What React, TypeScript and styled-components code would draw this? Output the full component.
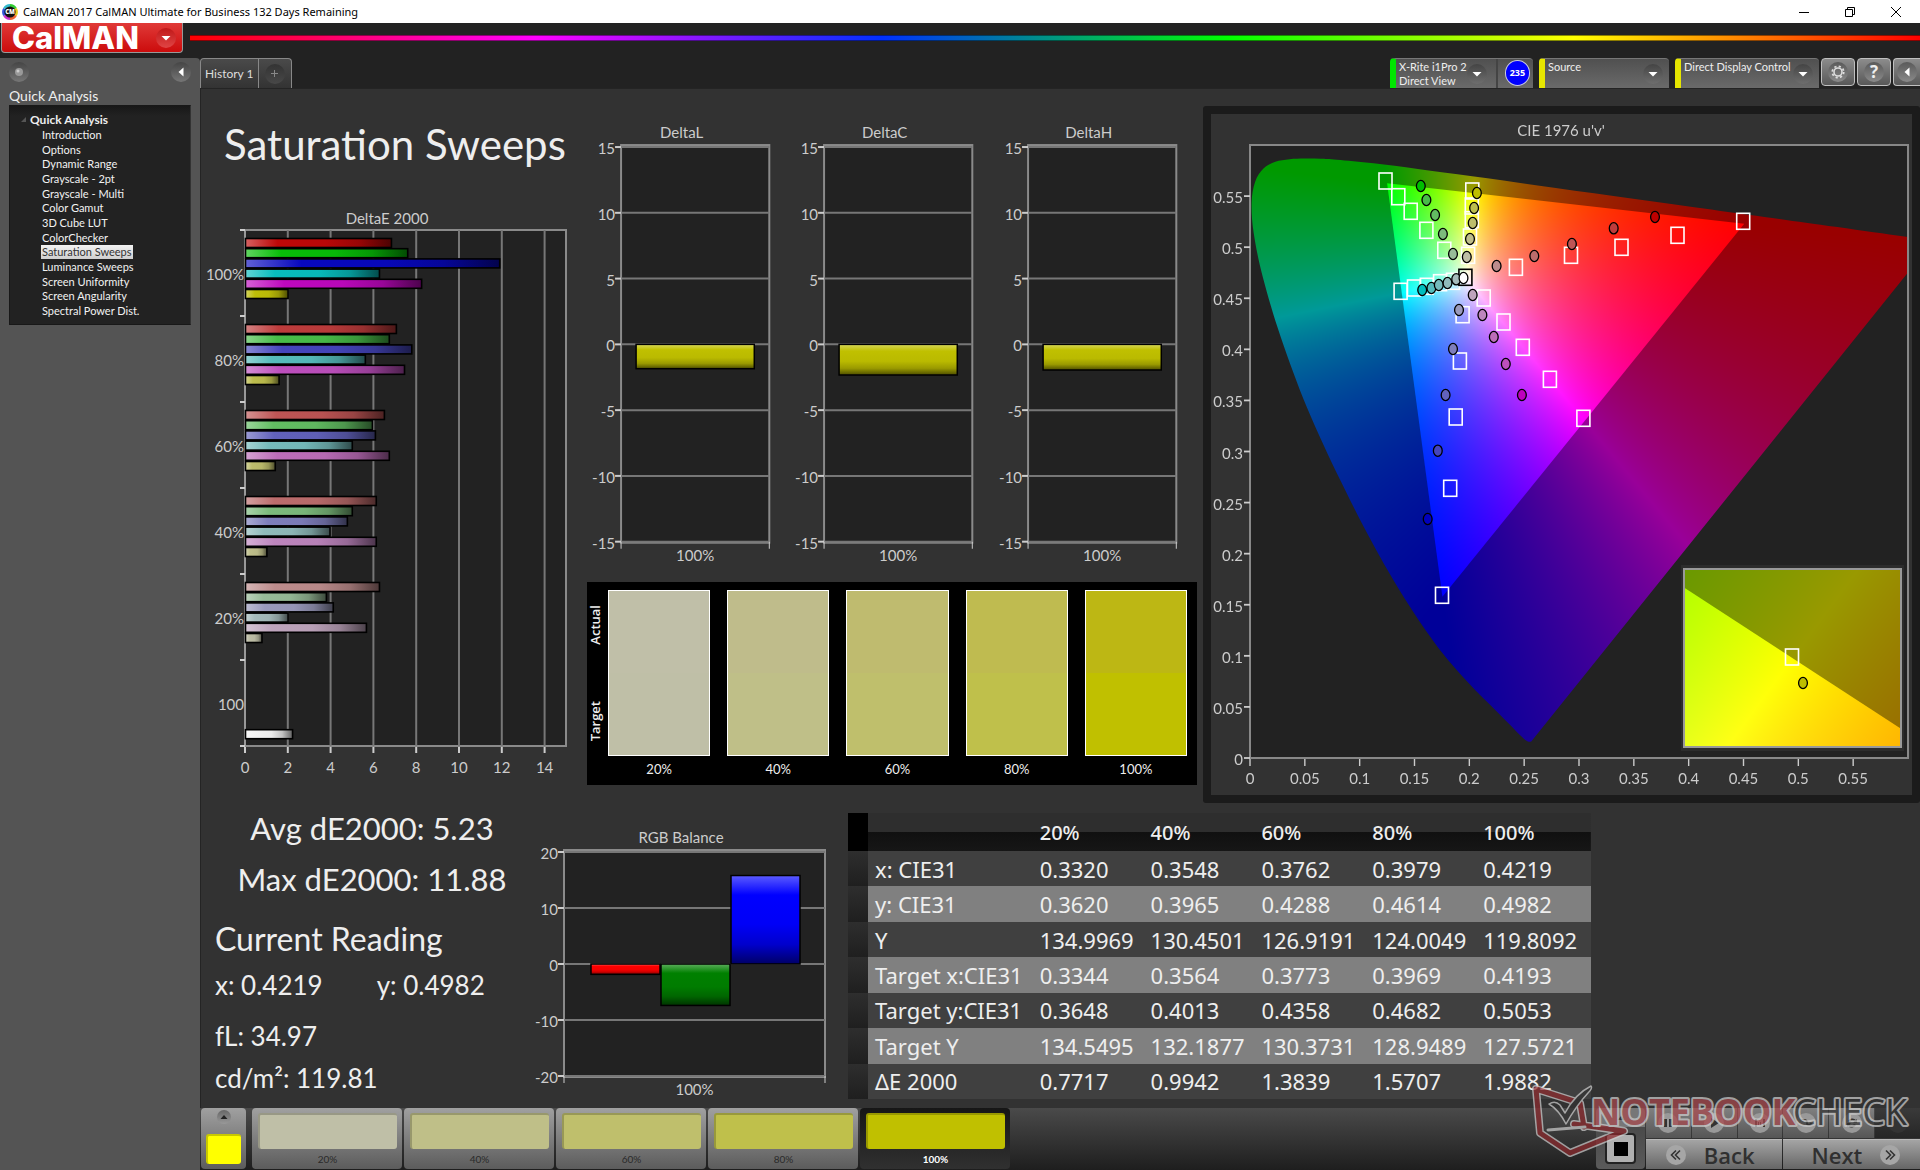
import React, { useEffect, useRef } from 'react';
import styled, { createGlobalStyle } from 'styled-components';

const GlobalStyle = createGlobalStyle`
  * { box-sizing: border-box; }
  html, body { margin: 0; background: #222; }
  body { font-family: Lato, "Open Sans", sans-serif; color: #eee; }
  button, select { font-family: inherit; color: inherit; margin: 0; padding: 0; border: 0; }
  ul { list-style: none; margin: 0; padding: 0; }
  h1, h2, p { margin: 0; font-weight: 400; }
  svg, canvas { display: block; }
`;

/* ---------- window frame ---------- */

const Page = styled.div`
  min-height: 100vh;
  display: flex;
  flex-direction: column;
  background: #222;
  overflow: hidden;
`;

const TitleBar = styled.header`
  display: flex;
  align-items: center;
  height: 23px;
  padding: 0 14px 0 2px;
  gap: 5px;
  background: #fff;
  color: #000;
`;

const TitleText = styled.span`
  flex: 1;
  font: 11px/16px "Noto Sans", "Open Sans", sans-serif;
`;

const WindowButton = styled.button`
  display: grid;
  place-items: center;
  width: 46px;
  height: 20px;
  background: none;
  color: #000;
  &:last-child { width: 20px; margin-left: 13px; }
`;

const BrandRow = styled.div`
  display: flex;
  height: 35px;
  padding-left: 1px;
`;

const Brand = styled.button`
  display: flex;
  align-items: center;
  justify-content: space-between;
  width: 182px;
  height: 30px;
  padding: 0 6px 0 10px;
  border: 1px solid #999;
  border-top: 0;
  border-radius: 0 0 4px 4px;
  background: linear-gradient(#e03a38, #cc0c0c);
  color: #fff;
  font: 800 31px/30px Inter, "Open Sans", sans-serif;
`;

const Rainbow = styled.div`
  flex: 1;
  height: 6px;
  margin: 12px 0 0 7px;
  border: solid rgba(0, 0, 0, 0.45);
  border-width: 1px 0;
  background: linear-gradient(90deg, #f00, #f0f 20%, #0030ff 40%, #0f0 60%, #ff0 80%, #f00);
`;

const Body = styled.div`
  flex: 1;
  display: flex;
`;

/* ---------- sidebar ---------- */

const Sidebar = styled.aside`
  flex: 0 0 200px;
  padding: 4px 9px;
  border-radius: 0 4px 0 0;
  background: #545454;
`;

const SidebarTools = styled.div`
  display: flex;
  justify-content: space-between;
  height: 22px;
`;

const Round = styled.button<{ $size?: number; $from?: string; $to?: string }>`
  display: grid;
  place-items: center;
  flex: none;
  width: ${(p) => p.$size || 20}px;
  height: ${(p) => p.$size || 20}px;
  border-radius: 50%;
  background: linear-gradient(${(p) => p.$from || '#454545'}, ${(p) => p.$to || '#767676'});
`;

const SidebarTitle = styled.h2`
  height: 21px;
  padding-top: 2px;
  font-size: 14px;
  line-height: 20px;
`;

const TreeBox = styled.nav`
  height: 220px;
  padding: 5px 0 6px 11px;
  border: 1px solid #181818;
  border-right-color: #333;
  background: linear-gradient(#181818, #222 10px);
  font-size: 11px;
  line-height: 14px;
`;

const TreeHead = styled.div`
  display: flex;
  align-items: center;
  gap: 4px;
  height: 17px;
  font-size: 12px;
  font-weight: 700;
`;

const Tree = styled.ul`
  display: flex;
  flex-direction: column;
  justify-content: space-between;
  height: 190px;
  padding-left: 20px;
`;

const TreeLink = styled.a<{ $selected?: boolean }>`
  display: inline-block;
  padding: 0 1px;
  color: ${(p) => (p.$selected ? '#333' : '#f2f2f2')};
  background: ${(p) => (p.$selected ? 'linear-gradient(#f2f2f2, #cfcfcf)' : 'none')};
  text-decoration: none;
`;

/* ---------- tabs and device bar ---------- */

const Main = styled.main`
  flex: 1;
  min-width: 0;
  display: flex;
  flex-direction: column;
`;

const TopBar = styled.div`
  display: flex;
  justify-content: space-between;
  height: 30px;
`;

const Group = styled.div<{ $gap?: number }>`
  display: flex;
  gap: ${(p) => p.$gap || 0}px;
`;

const Tab = styled.button`
  display: grid;
  place-items: center;
  min-width: 33px;
  padding: 0 4px;
  border: solid #888;
  border-width: 1px 1px 0 0;
  background: linear-gradient(#4a4a4a, #333);
  color: #ddd;
  font-size: 12px;
  &:first-child { border-left-width: 1px; border-radius: 4px 0 0 0; }
  &:last-child { border-radius: 0 4px 0 0; }
`;

const Device = styled.div<{ $stripe: string; $width: number }>`
  display: flex;
  width: ${(p) => p.$width}px;
  border-left: 6px solid ${(p) => p.$stripe};
  border-top: 1px solid #777;
  border-radius: 4px 4px 0 0;
  background: linear-gradient(#505050, #6a6a6a);
`;

const Meter = styled.button`
  flex: 1;
  display: flex;
  align-items: center;
  justify-content: space-between;
  padding: 0 9px 0 3px;
  border-right: 2px solid #444;
  background: none;
  text-align: left;
  font-size: 11px;
  line-height: 14px;
  white-space: nowrap;
`;

const MeterBadge = styled.span`
  width: 26px;
  height: 26px;
  margin: 1px 3px 0 7px;
  border: 1px solid #ccd;
  border-radius: 50%;
  background: #00f;
  color: #fff;
  font: 700 9px/24px "Open Sans", sans-serif;
  text-align: center;
`;

const SelectStack = styled.label`
  flex: 1;
  display: grid;
  align-items: center;
  > * { grid-area: 1 / 1; }
`;

const DeviceSelect = styled.select`
  appearance: none;
  width: 100%;
  height: 29px;
  padding: 0 4px 14px 3px;
  background: none;
  font-size: 11px;
  line-height: 14px;
`;

const SelectArrow = styled.span`
  justify-self: end;
  display: grid;
  place-items: center;
  width: 20px;
  height: 20px;
  margin: 0 6px 0 0;
  border-radius: 50%;
  background: linear-gradient(#444, #6e6e6e);
  pointer-events: none;
`;

const ToolButton = styled.button`
  display: grid;
  place-items: center;
  width: 34px;
  height: 28px;
  border: 1px solid #c0c0c0;
  border-radius: 4px;
  background: linear-gradient(#8c8c8c, #585858);
  &:last-child { width: 27px; border-right: 0; border-radius: 4px 0 0 4px; }
`;

const ToolDisc = styled.span`
  display: grid;
  place-items: center;
  width: 20px;
  height: 20px;
  border-radius: 50%;
  background: linear-gradient(#5a5a5a, #8a8a8a);
  font: 700 17px/20px "Open Sans", sans-serif;
`;

/* ---------- workspace ---------- */

const Workspace = styled.div`
  flex: 1;
  background: #323232;
  box-shadow: inset 1px 1px 0 #242424;
`;

const UpperGrid = styled.section`
  display: grid;
  grid-template-columns: minmax(0, 380fr) minmax(0, 620fr) minmax(0, 720fr);
  height: 715px;
`;

const LowerGrid = styled.section`
  display: grid;
  grid-template-columns: minmax(0, 330fr) minmax(0, 302fr) minmax(0, 759fr) minmax(0, 329fr);
  height: 305px;
`;

const PageTitle = styled.h1`
  height: 107px;
  padding: 29px 0 0 24px;
  font-size: 42px;
  line-height: 54px;
  white-space: nowrap;
`;

const DeltaRow = styled.div`
  display: grid;
  grid-template-columns: repeat(3, minmax(0, 1fr));
  height: 494px;
  padding: 29px 10px 0 0;
`;

const Swatches = styled.div`
  display: flex;
  height: 203px;
  margin: 0 3px 0 7px;
  padding: 8px 10px 0 0;
  background: #000;
`;

const SwatchSides = styled.div`
  display: flex;
  flex-direction: column;
  justify-content: space-between;
  width: 17px;
  height: 166px;
  margin-right: 4px;
  padding: 15px 0;
  font: 600 13px/17px "Open Sans", sans-serif;
`;

const SideLabel = styled.span`
  writing-mode: vertical-rl;
  transform: rotate(180deg);
`;

const SwatchList = styled.div`
  flex: 1;
  display: grid;
  grid-template-columns: repeat(5, minmax(0, 1fr));
  column-gap: 17px;
`;

const SwatchItem = styled.div`
  text-align: center;
  font-size: 13px;
  line-height: 26px;
`;

const SwatchBox = styled.div<{ $actual: string; $target: string }>`
  height: 166px;
  border: 1px solid #fff;
  background: linear-gradient(${(p) => p.$actual} 50%, ${(p) => p.$target} 50%);
`;

const CiePanel = styled.div`
  height: 697px;
  margin: 18px 0 0 3px;
  border: 8px solid #1b1b1b;
  border-radius: 3px;
`;

const CieStack = styled.div`
  display: grid;
  > * { grid-area: 1 / 1; width: 100%; height: auto; }
`;

/* ---------- readings ---------- */

const Readings = styled.div`
  padding: 0 0 0 15px;
  white-space: nowrap;
`;

const Stat = styled.p`
  width: 314px;
  font-size: 31px;
  line-height: 51px;
  text-align: center;
`;

const ReadingTitle = styled.h2`
  padding-top: 9px;
  font-size: 32px;
  line-height: 50px;
`;

const Reading = styled.p<{ $top: number }>`
  display: flex;
  gap: 54px;
  padding-top: ${(p) => p.$top}px;
  font-size: 26px;
  line-height: 42px;
`;

const BalanceCell = styled.div`
  padding-top: 3px;
`;

/* ---------- table ---------- */

const TableCell = styled.div`
  padding: 10px 0 0 16px;
`;

const DataTable = styled.table`
  width: 100%;
  height: 286px;
  border-collapse: collapse;
  table-layout: fixed;
  font: 22px/30px "Noto Sans", "Open Sans", sans-serif;
  th, td { padding: 0 0 0 3px; text-align: left; font-weight: 400; white-space: nowrap; }
  thead { background: linear-gradient(#2e2e2e 50%, #101010 50%, #161616); }
  thead th { height: 38px; padding-top: 2px; font-size: 20px; font-weight: 500; }
  thead td { background: #000; }
`;

const DataRow = styled.tr<{ $light: boolean }>`
  background: ${(p) => (p.$light ? '#808080' : '#404040')};
  td:first-child { background: linear-gradient(#2e2e2e, #1f1f1f); }
  th { padding-left: 7px; }
`;

/* ---------- bottom bar ---------- */

const BottomBar = styled.footer`
  position: relative;
  display: flex;
  justify-content: space-between;
  height: 62px;
  padding-bottom: 1px;
  background: linear-gradient(#4a4a4a, #1e1e1e);
`;

const Picker = styled.button`
  display: flex;
  flex-direction: column;
  align-items: center;
  justify-content: space-between;
  width: 45px;
  margin: 0 4px 0 1px;
  padding: 2px 0 5px;
  border-radius: 4px;
  background: linear-gradient(#a0a0a0, #5c5c5c);
`;

const PickerColor = styled.span`
  width: 35px;
  height: 30px;
  border: solid #c8c800;
  border-width: 2px 0 0 2px;
  border-radius: 3px;
  background: #ff0;
`;

const Patch = styled.button<{ $active?: boolean }>`
  width: 150px;
  padding: 5px 5px 0 6px;
  border-radius: 4px;
  background: ${(p) => (p.$active ? 'linear-gradient(#161616, #303030)' : 'linear-gradient(#a0a0a0, #5c5c5c)')};
  color: ${(p) => (p.$active ? '#fff' : '#2a2a2a')};
  font-size: 10px;
  font-weight: ${(p) => (p.$active ? 700 : 400)};
  line-height: 20px;
`;

const PatchColor = styled.span<{ $color: string }>`
  display: block;
  height: 36px;
  border: solid rgba(0, 0, 0, 0.2);
  border-width: 2px 0 0 2px;
  border-radius: 3px;
  background: ${(p) => p.$color};
`;

const StopButton = styled.button`
  display: flex;
  flex-direction: column;
  align-items: center;
  justify-content: space-between;
  width: 49px;
  height: 61px;
  padding: 5px 0;
  border-radius: 4px;
  background: linear-gradient(#777 19px, #4a4a4a 19px, #5a5a5a);
`;

const StopIcon = styled.span`
  display: grid;
  place-items: center;
  width: 31px;
  height: 31px;
  border: 2px solid #222;
  border-radius: 4px;
  background: #b0b0b0;
  &::after { content: ""; width: 14px; height: 14px; background: #000; }
`;

const Transport = styled.div`
  display: grid;
  grid-template-columns: repeat(6, minmax(0, 1fr));
  grid-template-rows: 30px 30px;
  gap: 1px;
  width: 274px;
`;

const SmallButton = styled.button<{ $off?: boolean }>`
  display: grid;
  place-items: center;
  background: ${(p) => (p.$off ? 'linear-gradient(#3a3a3a, #262626)' : 'linear-gradient(#808080, #565656)')};
`;

const StepButton = styled.button<{ $next?: boolean }>`
  grid-column: span 3;
  display: flex;
  flex-direction: ${(p) => (p.$next ? 'row-reverse' : 'row')};
  align-items: center;
  justify-content: space-between;
  padding: ${(p) => (p.$next ? '0 20px 0 28px' : '0 28px 0 20px')};
  border-top: 1px solid #b8b8b8;
  background: linear-gradient(#a4a4a4, #666);
  color: #303030;
  font: 600 22px/26px "Open Sans", sans-serif;
`;

const Watermark = styled.svg`
  position: absolute;
  right: 9px;
  bottom: 12px;
  width: 380px;
  height: 74px;
  opacity: 0.72;
  pointer-events: none;
`;

/* ---------- chart parts ---------- */

const Wide = styled.svg`
  width: 100%;
  height: auto;
  font-family: Lato, "Open Sans", sans-serif;
`;

const Label = ({ x, y, anchor = 'middle', size = 15, children }: any) => (
  <text x={x} y={y} textAnchor={anchor} dominantBaseline="central" fontSize={size} fill="#ccc">
    {children}
  </text>
);

const shade = (c: string, t: number) => {
  const n = parseInt(c.slice(1), 16);
  const ch = [n >> 16, (n >> 8) & 255, n & 255].map((v) => Math.round(t > 0 ? v + (255 - v) * t : v * (1 + t)));
  return `rgb(${ch.join(',')})`;
};

const BarFill = ({ id, color, vertical }: { id: string; color: string; vertical?: boolean }) => (
  <linearGradient id={id} x1="0" y1="0" x2={vertical ? 0 : 1} y2={vertical ? 1 : 0}>
    <stop offset="0" stopColor={shade(color, 0.36)} />
    <stop offset="0.22" stopColor={color} />
    <stop offset="0.55" stopColor={shade(color, -0.03)} />
    <stop offset="0.78" stopColor={shade(color, -0.2)} />
    <stop offset="1" stopColor={shade(color, -0.6)} />
  </linearGradient>
);

const sweepRows = [
  { label: '100%', v: [6.82, 7.58, 11.88, 6.26, 8.23, 1.99], c: ['#be0808', '#08be08', '#0808be', '#08bebe', '#be08be', '#bebe08'] },
  { label: '80%', v: [7.05, 6.72, 7.77, 5.6, 7.43, 1.57], c: ['#be3c3c', '#48bd48', '#4545bc', '#56bcbc', '#bd4fbd', '#bdbd4d'] },
  { label: '60%', v: [6.49, 5.93, 6.07, 4.99, 6.72, 1.39], c: ['#be5555', '#62bd62', '#6262bc', '#76bcbc', '#bd6db9', '#bdbd6c'] },
  { label: '40%', v: [6.11, 4.99, 4.76, 3.95, 6.11, 1.0], c: ['#bc6c6c', '#7cbb7c', '#7e7ebb', '#90bbbb', '#bd85bd', '#bebe8a'] },
  { label: '20%', v: [6.26, 3.78, 4.1, 1.99, 5.65, 0.77], c: ['#bd8c8c', '#98bc98', '#9a9abc', '#a5bbbb', '#bea4bc', '#bebea6'] },
  { label: '100', v: [0, 0, 0, 0, 0, 0, 2.2], c: ['', '', '', '', '', '', '#f2f2f2'] },
];

function DeltaEChart() {
  const left = 45;
  const top = 35;
  const unit = 21.4;
  const group = 86;
  return (
    <Wide viewBox="0 0 380 600" role="img" aria-label="DeltaE 2000">
      <Label x={187} y={23} size={15}>DeltaE 2000</Label>
      <rect x={left} y={top} width={321} height={516} fill="#222" stroke="#8a8a8a" strokeWidth={2} />
      {[0, 2, 4, 6, 8, 10, 12, 14].map((n) => (
        <g key={n}>
          {n > 0 && <line x1={left + n * unit} x2={left + n * unit} y1={top} y2={551} stroke="#777" strokeWidth={2} />}
          <line x1={left + n * unit} x2={left + n * unit} y1={552} y2={558} stroke="#ccc" strokeWidth={2} />
          <Label x={left + n * unit} y={572}>{n}</Label>
        </g>
      ))}
      <line x1={left} x2={left} y1={top} y2={551} stroke="#999" strokeWidth={2} />
      {[0, 1, 2, 3, 4, 5, 6].map((n) => (
        <line key={n} x1={left - 5} x2={left} y1={top + n * group} y2={top + n * group} stroke="#ccc" strokeWidth={2} />
      ))}
      {sweepRows.map((row, r) => (
        <g key={row.label}>
          <Label x={left - 1} y={top + r * group + 44} anchor="end">{row.label}</Label>
          {row.v.map((v, i) =>
            v ? (
              <g key={i}>
                <defs><BarFill id={`e${r}${i}`} color={row.c[i]} /></defs>
                <rect
                  x={left + 0.5} y={top + r * group + 8.5 + i * 10.2} width={v * unit} height={9}
                  fill={`url(#e${r}${i})`} stroke="#000" strokeWidth={1.6}
                />
              </g>
            ) : null,
          )}
        </g>
      ))}
    </Wide>
  );
}

type Bar = { x: number; w: number; v: number; color: string };
type ColumnProps = {
  title: string; width: number; height: number; left: number; right: number;
  top: number; base: number; max: number; step: number; bars: Bar[]; id: string;
};

function ColumnChart({ title, width, height, left, right, top, base, max, step, bars, id }: ColumnProps) {
  const unit = (base - top) / (2 * max);
  const zero = (top + base) / 2;
  const ticks: number[] = [];
  for (let n = max; n >= -max; n -= step) ticks.push(n);
  return (
    <Wide viewBox={`0 0 ${width} ${height}`} role="img" aria-label={title}>
      <Label x={width / 2} y={top - 15}>{title}</Label>
      <rect x={left} y={top - 2} width={right - left} height={base - top + 3} fill="#222" stroke="#8a8a8a" strokeWidth={2} />
      {ticks.map((n) => (
        <g key={n}>
          <line x1={left} x2={right} y1={zero - n * unit} y2={zero - n * unit} stroke="#777" strokeWidth={2} />
          <line x1={left - 6} x2={left} y1={zero - n * unit} y2={zero - n * unit} stroke="#ccc" strokeWidth={2} />
          <Label x={left - 6} y={zero - n * unit + 1} anchor="end">{n}</Label>
        </g>
      ))}
      {[left, right].map((x) => <line key={x} x1={x} x2={x} y1={base} y2={base + 7} stroke="#ccc" strokeWidth={1} />)}
      {bars.map((b, i) => (
        <g key={i}>
          <defs><BarFill id={`${id}${i}`} color={b.color} vertical /></defs>
          <rect
            x={b.x} width={b.w} y={b.v > 0 ? zero - b.v * unit : zero} height={Math.abs(b.v) * unit}
            fill={`url(#${id}${i})`} stroke="#000" strokeWidth={1.5}
          />
        </g>
      ))}
      <Label x={(left + right) / 2} y={base + 13}>100%</Label>
    </Wide>
  );
}

/* ---------- CIE 1976 diagram ---------- */

const locusXY = [
  [0.1741, 0.005], [0.1733, 0.0048], [0.1714, 0.0051], [0.1689, 0.0069], [0.1644, 0.0109], [0.1566, 0.0177],
  [0.151, 0.0227], [0.144, 0.0297], [0.1355, 0.0399], [0.1241, 0.0578], [0.1096, 0.0868], [0.0913, 0.1327],
  [0.0687, 0.2007], [0.0454, 0.295], [0.0235, 0.4127], [0.0082, 0.5384], [0.0039, 0.6548], [0.0139, 0.7502],
  [0.0389, 0.812], [0.0743, 0.8338], [0.1142, 0.8262], [0.1547, 0.8059], [0.1929, 0.7816], [0.2296, 0.7543],
  [0.3016, 0.6923], [0.3731, 0.6245], [0.4441, 0.5547], [0.5125, 0.4866], [0.5752, 0.4242], [0.627, 0.3725],
  [0.6658, 0.334], [0.6915, 0.3083], [0.719, 0.2809], [0.7347, 0.2653],
];
const gamutXY = [[0.64, 0.33], [0.3, 0.6], [0.15, 0.06]];

const toUV = ([x, y]: number[]) => {
  const d = -2 * x + 12 * y + 3;
  return [(4 * x) / d, (9 * y) / d];
};
const toXY = (u: number, v: number) => {
  const d = 6 * u - 16 * v + 12;
  return [(9 * u) / d, (4 * v) / d];
};

// Linear sRGB of a chromaticity, scaled so that the strongest channel is full
const colorAt = (x: number, y: number) => {
  const X = x / y;
  const Z = (1 - x - y) / y;
  const lin = [
    3.2406 * X - 1.5372 - 0.4986 * Z,
    -0.9689 * X + 1.8758 + 0.0415 * Z,
    0.0557 * X - 0.204 + 1.057 * Z,
  ].map((c) => Math.max(0, c));
  const top = Math.max(...lin);
  return lin.map((c) => (255 * c) / top);
};

const PLOT = { x: 39, y: 31, w: 658, h: 613, max: 0.6 };
const INSET = { x: 473, y: 455, w: 217, h: 178, cx: 0.4193, cy: 0.5053, range: 0.05 };

function paintLayer(w: number, h: number, at: (px: number, py: number) => number[], level: number) {
  const layer = document.createElement('canvas');
  layer.width = w;
  layer.height = h;
  const ctx = layer.getContext('2d')!;
  const img = ctx.createImageData(w, h);
  for (let j = 0; j < h; j++) {
    for (let i = 0; i < w; i++) {
      const [x, y] = at(i + 0.5, j + 0.5);
      const c = y > 0.001 ? colorAt(x, y) : [0, 0, 0];
      const k = (j * w + i) * 4;
      img.data[k] = c[0] * level;
      img.data[k + 1] = c[1] * level;
      img.data[k + 2] = c[2] * level;
      img.data[k + 3] = 255;
    }
  }
  ctx.putImageData(img, 0, 0);
  return layer;
}

function trace(ctx: CanvasRenderingContext2D, pts: number[][], smooth: boolean) {
  ctx.beginPath();
  ctx.moveTo(pts[0][0], pts[0][1]);
  for (let i = 1; i < pts.length; i++) {
    const [x, y] = pts[i];
    if (smooth) {
      const a = pts[i - 1];
      const before = pts[Math.max(0, i - 2)];
      const after = pts[Math.min(pts.length - 1, i + 1)];
      ctx.bezierCurveTo(
        a[0] + (x - before[0]) / 6, a[1] + (y - before[1]) / 6,
        x - (after[0] - a[0]) / 6, y - (after[1] - a[1]) / 6, x, y,
      );
    } else ctx.lineTo(x, y);
  }
  ctx.closePath();
}

function drawDiagram(canvas: HTMLCanvasElement) {
  const ctx = canvas.getContext('2d')!;
  ctx.clearRect(0, 0, canvas.width, canvas.height);
  ctx.fillStyle = '#222';
  ctx.fillRect(PLOT.x, PLOT.y, PLOT.w, PLOT.h);

  const place = (p: number[]) => {
    const [u, v] = toUV(p);
    return [PLOT.x + (u / PLOT.max) * PLOT.w, PLOT.y + PLOT.h - (v / PLOT.max) * PLOT.h];
  };
  const sample = (i: number, j: number) => toXY((i / PLOT.w) * PLOT.max, ((PLOT.h - j) / PLOT.h) * PLOT.max);
  const dim = paintLayer(PLOT.w, PLOT.h, sample, 0.6);
  const full = paintLayer(PLOT.w, PLOT.h, sample, 1);
  ctx.save();
  ctx.beginPath();
  ctx.rect(PLOT.x, PLOT.y, PLOT.w, PLOT.h);
  ctx.clip();
  trace(ctx, locusXY.map(place), true);
  ctx.clip();
  ctx.drawImage(dim, PLOT.x, PLOT.y);
  trace(ctx, gamutXY.map(place), false);
  ctx.clip();
  ctx.drawImage(full, PLOT.x, PLOT.y);
  ctx.restore();

  const zoomPlace = ([x, y]: number[]) => [
    INSET.x + ((x - INSET.cx) / INSET.range + 0.5) * INSET.w,
    INSET.y + (0.5 - (y - INSET.cy) / INSET.range) * INSET.h,
  ];
  const zoomSample = (i: number, j: number) => [
    INSET.cx + (i / INSET.w - 0.5) * INSET.range,
    INSET.cy + (0.5 - j / INSET.h) * INSET.range,
  ];
  ctx.fillStyle = '#2c2c2c';
  ctx.fillRect(INSET.x - 3, INSET.y - 4, INSET.w + 6, INSET.h + 8);
  ctx.save();
  ctx.beginPath();
  ctx.rect(INSET.x, INSET.y, INSET.w, INSET.h);
  ctx.clip();
  ctx.drawImage(paintLayer(INSET.w, INSET.h, zoomSample, 0.6), INSET.x, INSET.y);
  trace(ctx, gamutXY.map(zoomPlace), false);
  ctx.clip();
  ctx.drawImage(paintLayer(INSET.w, INSET.h, zoomSample, 1), INSET.x, INSET.y);
  ctx.restore();
}

// Target squares, in pixels of the plot area
const targets = [
  [135.5, 36], [148.3, 51.7], [160.7, 66.3], [176.4, 85.3], [194.3, 105.3],
  [222.3, 46], [221.8, 61], [221.8, 74.7], [220, 92], [218.1, 110.3],
  [150.6, 146.3], [164, 143], [176.8, 141.3], [190.1, 137.7], [203, 136.3],
  [493.2, 76.3], [427.5, 90.3], [371.5, 102.3], [321, 110.3], [265.9, 122.3],
  [233.7, 153], [253.5, 177], [272.8, 202.3], [299.9, 234.3], [333.4, 273.3],
  [212.6, 169.7], [209.9, 216], [205.7, 272], [200.2, 343.3], [192, 450.3],
];

// Measured points of the six hues
const measured: { hues: string[]; at: number[][] }[] = [
  { hues: ['#00be00', '#48bd48', '#62bd62', '#7cbb7c', '#98bc98'], at: [[170.8, 41], [176.4, 55], [185.1, 70], [192.9, 89], [203, 109]] },
  { hues: ['#bebe00', '#bdbd4d', '#bdbd6c', '#bebe8a', '#bebea6'], at: [[226.9, 48], [224.1, 63], [222.7, 78], [220, 94], [216.8, 112]] },
  { hues: ['#00bebe', '#56bcbc', '#76bcbc', '#90bbbb', '#a5bbbb'], at: [[172.2, 145], [181.4, 143], [188.8, 140], [197.5, 138], [206.2, 134.3]] },
  { hues: ['#be0000', '#be3c3c', '#be5555', '#bc6c6c', '#bd8c8c'], at: [[405, 72], [363.7, 83.3], [321.9, 99], [284.3, 111], [246.6, 121]] },
  { hues: ['#bea4bc', '#bd85bd', '#bd6db9', '#bd4fbd', '#be00be'], at: [[222.7, 150], [232.4, 170], [243.8, 192], [255.8, 219], [271.9, 250]] },
  { hues: ['#9a9abc', '#7e7ebb', '#6262bc', '#4545bc', '#0000be'], at: [[209, 165], [203, 204], [195.6, 250], [187.8, 305.7], [177.7, 374]] },
];

const Square = ({ x, y, color = '#fff' }: { x: number; y: number; color?: string }) => (
  <rect x={x - 6.5} y={y - 8} width={13} height={16} fill="none" stroke={color} strokeWidth={1.6} />
);
const Dot = ({ x, y, fill }: { x: number; y: number; fill: string }) => (
  <ellipse cx={x} cy={y} rx={4.4} ry={5.6} fill={fill} stroke="#000" strokeWidth={1.3} />
);

function CieChart() {
  const ref = useRef<HTMLCanvasElement>(null);
  useEffect(() => {
    if (ref.current) drawDiagram(ref.current);
  }, []);
  const marks = Array.from({ length: 12 }, (_, i) => i * 0.05);
  const bottom = PLOT.y + PLOT.h;
  return (
    <CieStack>
      <canvas ref={ref} width={701} height={680} />
      <Wide viewBox="0 0 701 680" role="img" aria-label="CIE 1976 u'v'">
        <Label x={350} y={16}>CIE 1976 u'v'</Label>
        <rect x={PLOT.x} y={PLOT.y} width={PLOT.w} height={PLOT.h} fill="none" stroke="#888" strokeWidth={2} />
        {marks.map((m) => {
          const x = PLOT.x + (m / PLOT.max) * PLOT.w;
          const y = bottom - (m / PLOT.max) * PLOT.h;
          const text = String(Number(m.toFixed(2)));
          return (
            <g key={text}>
              <line x1={x} x2={x} y1={bottom + 1} y2={bottom + 8} stroke="#ccc" strokeWidth={1.4} />
              <line x1={PLOT.x - 6} x2={PLOT.x} y1={y} y2={y} stroke="#ccc" strokeWidth={1.8} />
              <Label x={x} y={bottom + 20}>{text}</Label>
              <Label x={PLOT.x - 7} y={y + 1} anchor="end">{text}</Label>
            </g>
          );
        })}
        <g transform={`translate(${PLOT.x} ${PLOT.y})`}>
          {targets.map(([x, y], i) => <Square key={i} x={x} y={y} />)}
          <Square x={215.4} y={132.3} color="#000" />
          {measured.map((s) => s.at.map(([x, y], i) => <Dot key={`${x}-${y}`} x={x} y={y} fill={s.hues[i]} />))}
          <Dot x={213.5} y={133} fill="#fff" />
        </g>
        <rect x={INSET.x} y={INSET.y} width={INSET.w} height={INSET.h} fill="none" stroke="#999" strokeWidth={2} />
        <Square x={581} y={543} />
        <Dot x={592} y={569} fill="#bebe00" />
      </Wide>
    </CieStack>
  );
}

/* ---------- icons ---------- */

const Caret = ({ dir = 'down', color = '#fff' }: { dir?: 'down' | 'left' | 'up'; color?: string }) => (
  <svg width="10" height="10" viewBox="0 0 10 10" fill={color}>
    <path d={dir === 'down' ? 'M0.5 3h9L5 7.5z' : dir === 'up' ? 'M1.5 7h7L5 3z' : 'M7.5 0.5v9L2.5 5z'} />
  </svg>
);

const AppIcon = () => (
  <svg width="16" height="16" viewBox="0 0 16 16">
    <g fill="none" strokeWidth="3">
      <path d="M8 1.6A6.4 6.4 0 0 1 13.5 4.8" stroke="#3c3" />
      <path d="M13.5 4.8A6.4 6.4 0 0 1 13.5 11.2" stroke="#e8d020" />
      <path d="M13.5 11.2A6.4 6.4 0 0 1 8 14.4" stroke="#e63" />
      <path d="M8 14.4A6.4 6.4 0 0 1 2.5 11.2" stroke="#c3c" />
      <path d="M2.5 11.2A6.4 6.4 0 0 1 2.5 4.8" stroke="#35d" />
      <path d="M2.5 4.8A6.4 6.4 0 0 1 8 1.6" stroke="#3bc" />
    </g>
    <circle cx="8" cy="8" r="5.6" fill="#111" />
    <text x="8" y="10.4" textAnchor="middle" fontSize="6" fontWeight="800" fill="#fff" fontFamily="Open Sans">CM</text>
  </svg>
);

const Gear = () => (
  <svg width="14" height="14" viewBox="0 0 14 14" fill="none" stroke="#ddd">
    <circle cx="7" cy="7" r="4" strokeWidth="1.6" />
    <circle cx="7" cy="7" r="5.7" strokeWidth="1.8" strokeDasharray="2.2 2.28" />
  </svg>
);

const glyphs = [
  'M6 6h3v8H6zM11 6h3v8h-3z',
  'M7 5l8 5-8 5z',
  'M5 6h2v8H5zM13 6h2v8h-2zM8 9h1v3H8zM10 9h1v3h-1z',
  'M4 10a3 3 0 0 1 6 0 3 3 0 0 0 6 0h-2a1 1 0 0 1-2 0 3 3 0 0 0-8 0z',
  'M6 8a5 5 0 0 1 8-1l1-1v4h-4l1.5-1.5A3 3 0 0 0 8 9zM14 12a5 5 0 0 1-8 1l-1 1v-4h4l-1.5 1.5A3 3 0 0 0 12 11z',
];

const Disc = ({ path, off }: { path?: string; off?: boolean }) => (
  <svg width="20" height="20" viewBox="0 0 20 20">
    <circle cx="10" cy="10" r="10" fill={off ? '#333' : '#999'} />
    {path && <path d={path} fill="#333" />}
  </svg>
);

const Chevrons = ({ next }: { next?: boolean }) => (
  <svg width="20" height="20" viewBox="0 0 20 20">
    <circle cx="10" cy="10" r="10" fill="#a6a6a6" />
    <path
      d={next ? 'M6 5.5l4.5 4.5L6 14.5M10 5.5l4.5 4.5-4.5 4.5' : 'M10 5.5L5.5 10l4.5 4.5M14 5.5L9.5 10l4.5 4.5'}
      fill="none" stroke="#333" strokeWidth="1.6"
    />
  </svg>
);

const NotebookCheck = () => (
  <Watermark viewBox="0 0 380 74" aria-label="Notebookcheck">
    <g strokeLinejoin="round" strokeLinecap="round">
      <path d="M5 5l44 14 4 24M5 5l4 44 30 20 54-22-50-7" fill="none" stroke="#ccc" strokeWidth="8" />
      <path d="M5 5l44 14 4 24M5 5l4 44 30 20 54-22-50-7" fill="none" stroke="#8d2a2e" strokeWidth="5" />
      <path d="M17 46l37-3" stroke="#ccc" strokeWidth="3" />
      <path d="M18 20q6-4 11 1l5 8Q44 10 60 2q2 2-3 7-12 13-22 31Q28 26 18 20z" fill="#333" stroke="#ccc" strokeWidth="1.5" />
    </g>
    <g fontFamily="Open Sans, sans-serif" fontSize="36" paintOrder="stroke" stroke="#ccc" strokeWidth="4" strokeLinejoin="round">
      <text x="60" y="41" fontWeight="700" fill="#a8484d">NOTEBOOK</text>
      <text x="262" y="41" fontWeight="400" fill="#333">CHECK</text>
    </g>
  </Watermark>
);

/* ---------- data ---------- */

const treeItems = [
  'Introduction', 'Options', 'Dynamic Range', 'Grayscale - 2pt', 'Grayscale - Multi', 'Color Gamut', '3D Cube LUT',
  'ColorChecker', 'Saturation Sweeps', 'Luminance Sweeps', 'Screen Uniformity', 'Screen Angularity', 'Spectral Power Dist.',
];

const patches = [
  { label: '20%', actual: '#c0bfa8', target: '#bfbfa7' },
  { label: '40%', actual: '#bfbc8b', target: '#bfbf88' },
  { label: '60%', actual: '#bfbb6f', target: '#bfbf6c' },
  { label: '80%', actual: '#bfbb50', target: '#bfc04b' },
  { label: '100%', actual: '#bdb714', target: '#c0c000' },
];

const tableRows = [
  ['x: CIE31', '0.3320', '0.3548', '0.3762', '0.3979', '0.4219'],
  ['y: CIE31', '0.3620', '0.3965', '0.4288', '0.4614', '0.4982'],
  ['Y', '134.9969', '130.4501', '126.9191', '124.0049', '119.8092'],
  ['Target x:CIE31', '0.3344', '0.3564', '0.3773', '0.3969', '0.4193'],
  ['Target y:CIE31', '0.3648', '0.4013', '0.4358', '0.4682', '0.5053'],
  ['Target Y', '134.5495', '132.1877', '130.3731', '128.9489', '127.5721'],
  ['ΔE 2000', '0.7717', '0.9942', '1.3839', '1.5707', '1.9882'],
];

const deltas = [
  { title: 'DeltaL', v: -1.85 },
  { title: 'DeltaC', v: -2.33 },
  { title: 'DeltaH', v: -1.95 },
];

const Picklist = ({ name, width }: { name: string; width: number }) => (
  <Device $stripe="#e6e600" $width={width}>
    <SelectStack>
      <DeviceSelect aria-label={name}><option>{name}</option></DeviceSelect>
      <SelectArrow><Caret /></SelectArrow>
    </SelectStack>
  </Device>
);

export default function App() {
  return (
    <Page>
      <GlobalStyle />
      <TitleBar>
        <AppIcon />
        <TitleText>CalMAN 2017 CalMAN Ultimate for Business 132 Days Remaining</TitleText>
        <Group>
          <WindowButton aria-label="Minimize">
            <svg width="10" height="10"><path d="M0 5.5h10" stroke="#000" /></svg>
          </WindowButton>
          <WindowButton aria-label="Restore">
            <svg width="10" height="10" fill="none" stroke="#000"><path d="M.5 2.500h7v7h-7zM2.500 2.500v-2h7v7h-2" /></svg>
          </WindowButton>
          <WindowButton aria-label="Close">
            <svg width="10" height="10" stroke="#000"><path d="M0 0l10 10M10 0L0 10" /></svg>
          </WindowButton>
        </Group>
      </TitleBar>

      <BrandRow>
        <Brand>
          CalMAN
          <Round as="span" $from="#c01818" $to="#e04545"><Caret /></Round>
        </Brand>
        <Rainbow />
      </BrandRow>

      <Body>
        <Sidebar>
          <SidebarTools>
            <Round aria-label="Pin">
              <svg width="8" height="8"><circle cx="4" cy="4" r="4" fill="#999" /><circle cx="3" cy="3" r="1.5" fill="#ccc" /></svg>
            </Round>
            <Round aria-label="Collapse"><Caret dir="left" /></Round>
          </SidebarTools>
          <SidebarTitle>Quick Analysis</SidebarTitle>
          <TreeBox>
            <TreeHead>
              <svg width="5" height="5"><path d="M5 0v5H0z" fill="#555" /></svg>
              Quick Analysis
            </TreeHead>
            <Tree>
              {treeItems.map((t) => (
                <li key={t}><TreeLink href="#" $selected={t === 'Saturation Sweeps'}>{t}</TreeLink></li>
              ))}
            </Tree>
          </TreeBox>
        </Sidebar>

        <Main>
          <TopBar>
            <Group>
              <Tab>History 1</Tab>
              <Tab aria-label="Add history">
                <Round as="span" $from="#333" $to="#484848">
                  <svg width="7" height="7" stroke="#888"><path d="M3.5 0v7M0 3.5h7" /></svg>
                </Round>
              </Tab>
            </Group>
            <Group $gap={2}>
              <Group $gap={6}>
                <Device $stripe="#00e600" $width={143}>
                  <Meter aria-haspopup="menu">
                    <span>X-Rite i1Pro 2<br />Direct View</span>
                    <Round as="span" $from="#444" $to="#6e6e6e"><Caret /></Round>
                  </Meter>
                  <MeterBadge>235</MeterBadge>
                </Device>
                <Picklist name="Source" width={130} />
                <Picklist name="Direct Display Control" width={144} />
              </Group>
              <ToolButton aria-label="Settings"><ToolDisc><Gear /></ToolDisc></ToolButton>
              <ToolButton aria-label="Help"><ToolDisc>?</ToolDisc></ToolButton>
              <ToolButton aria-label="Collapse toolbar"><ToolDisc><Caret dir="left" /></ToolDisc></ToolButton>
            </Group>
          </TopBar>

          <Workspace>
            <UpperGrid>
              <div>
                <PageTitle>Saturation Sweeps</PageTitle>
                <DeltaEChart />
              </div>
              <div>
                <DeltaRow>
                  {deltas.map((d) => (
                    <ColumnChart
                      key={d.title} id={d.title} title={d.title} width={203} height={450} left={41} right={189}
                      top={30} base={424} max={15} step={5} bars={[{ x: 56, w: 118, v: d.v, color: '#c0c000' }]}
                    />
                  ))}
                </DeltaRow>
                <Swatches>
                  <SwatchSides>
                    <SideLabel>Actual</SideLabel>
                    <SideLabel>Target</SideLabel>
                  </SwatchSides>
                  <SwatchList>
                    {patches.map((p) => (
                      <SwatchItem key={p.label}>
                        <SwatchBox $actual={p.actual} $target={p.target} />
                        {p.label}
                      </SwatchItem>
                    ))}
                  </SwatchList>
                </Swatches>
              </div>
              <CiePanel><CieChart /></CiePanel>
            </UpperGrid>

            <LowerGrid>
              <Readings>
                <Stat>Avg dE2000: 5.23</Stat>
                <Stat>Max dE2000: 11.88</Stat>
                <ReadingTitle>Current Reading</ReadingTitle>
                <Reading $top={0}><span>x: 0.4219</span><span>y: 0.4982</span></Reading>
                <Reading $top={9}>fL: 34.97</Reading>
                <Reading $top={0}>cd/m²: 119.81</Reading>
              </Readings>
              <BalanceCell>
                <ColumnChart
                  id="rgb" title="RGB Balance" width={302} height={302} left={34} right={295} top={46} base={270}
                  max={20} step={10}
                  bars={[
                    { x: 61, w: 69, v: -1.85, color: '#ff0000' },
                    { x: 131, w: 69, v: -7.4, color: '#008000' },
                    { x: 201, w: 69, v: 15.8, color: '#0000ff' },
                  ]}
                />
              </BalanceCell>
              <TableCell>
                <DataTable>
                  <colgroup>
                    <col style={{ width: '2.7%' }} />
                    <col style={{ width: '22.7%' }} />
                  </colgroup>
                  <thead>
                    <tr>
                      <td />
                      <th aria-label="Quantity" />
                      {patches.map((p) => <th key={p.label} scope="col">{p.label}</th>)}
                    </tr>
                  </thead>
                  <tbody>
                    {tableRows.map(([head, ...cells], i) => (
                      <DataRow key={head} $light={i % 2 === 1}>
                        <td />
                        <th scope="row">{head}</th>
                        {cells.map((c) => <td key={c}>{c}</td>)}
                      </DataRow>
                    ))}
                  </tbody>
                </DataTable>
              </TableCell>
            </LowerGrid>
          </Workspace>

          <BottomBar>
            <Group $gap={2}>
              <Picker aria-label="Pick color">
                <Round as="span" $size={14} $from="#666" $to="#999"><Caret dir="up" color="#222" /></Round>
                <PickerColor />
              </Picker>
              {patches.map((p) => (
                <Patch key={p.label} $active={p.label === '100%'}>
                  <PatchColor $color={p.target} />
                  {p.label}
                </Patch>
              ))}
            </Group>
            <Group $gap={1}>
              <StopButton aria-label="Stop"><Caret dir="up" color="#333" /><StopIcon /></StopButton>
              <Transport>
                {['Pause', 'Play', 'Step', 'Loop', 'Refresh'].map((n, i) => (
                  <SmallButton key={n} aria-label={n}><Disc path={glyphs[i]} /></SmallButton>
                ))}
                <SmallButton $off aria-label="Record"><Disc off /></SmallButton>
                <StepButton><Chevrons />Back</StepButton>
                <StepButton $next><Chevrons next />Next</StepButton>
              </Transport>
            </Group>
            <NotebookCheck />
          </BottomBar>
        </Main>
      </Body>
    </Page>
  );
}
